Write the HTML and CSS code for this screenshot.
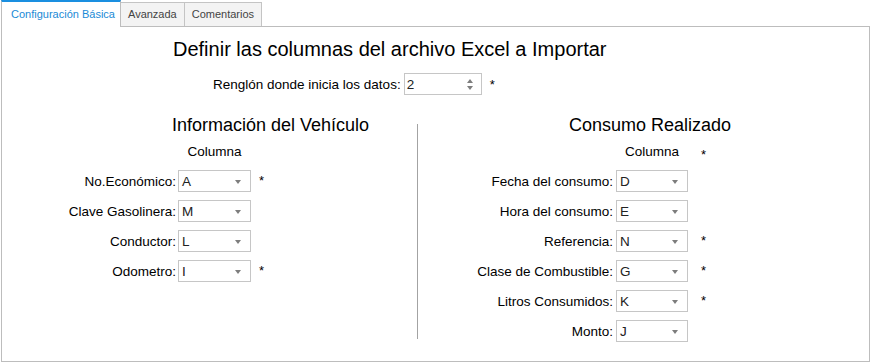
FILE: index.html
```html
<!DOCTYPE html>
<html>
<head>
  <meta charset="UTF-8" />
  <title>Importar Excel</title>
  <link rel="stylesheet" href="styles.css">
</head>
<body>

<div class="tabs">
  <div class="tab active">Configuración Básica</div>
  <div class="tab">Avanzada</div>
  <div class="tab">Comentarios</div>
</div>

<div class="panel">
  <h2 class="title">Definir las columnas del archivo Excel a Importar</h2>

  <div class="start-row">
    <span class="label">Renglón donde inicia los datos:</span>
    <div class="spin">2<span class="spin-arrows"><i class="up"></i><i class="down"></i></span></div>
    <span class="req">*</span>
  </div>

  <div class="columns">
    <div class="section left">
      <h3>Información del Vehículo</h3>
      <div class="fields" id="vehicleFields"></div>
    </div>
    <div class="divider"></div>
    <div class="section right">
      <h3>Consumo Realizado</h3>
      <div class="fields" id="consumoFields"></div>
    </div>
  </div>
</div>

<script>
  const vehicle = [
    { label: "No.Económico:", col: "A", req: true },
    { label: "Clave Gasolinera:", col: "M", req: false },
    { label: "Conductor:", col: "L", req: false },
    { label: "Odometro:", col: "I", req: true }
  ];

  const consumo = [
    { label: "Fecha del consumo:", col: "D", req: false },
    { label: "Hora del consumo:", col: "E", req: false },
    { label: "Referencia:", col: "N", req: true },
    { label: "Clase de Combustible:", col: "G", req: true },
    { label: "Litros Consumidos:", col: "K", req: true },
    { label: "Monto:", col: "J", req: false }
  ];

  function renderFields(id, rows, headReq) {
    const box = document.getElementById(id);
    let html = `<span></span><span class="col-head">Columna</span><span class="req">${headReq ? "*" : ""}</span>`;
    rows.forEach(r => {
      html += `
        <span class="label">${r.label}</span>
        <div class="combo">${r.col}<i class="arrow"></i></div>
        <span class="req">${r.req ? "*" : ""}</span>
      `;
    });
    box.innerHTML = html;
  }

  renderFields("vehicleFields", vehicle, false);
  renderFields("consumoFields", consumo, true);
</script>

</body>
</html>
```

FILE: styles.css
```css
body {
  margin: 0;
  font-family: "Liberation Sans", Arial, sans-serif;
  font-size: 13.5px;
  color: #000;
  background: #fff;
}

.tabs { display: flex; height: 26px; margin-left: 1px; align-items: flex-end; }
.tab {
  height: 24px;
  box-sizing: border-box;
  padding: 5px 7px 0 7px;
  font-size: 11px;
  white-space: nowrap;
  color: #444;
  background: #f3f3f3;
  border: 1px solid #c4c4c4;
  border-bottom: none;
  border-left: none;
}
.tab.active {
  height: 27px;
  margin-bottom: -1px;
  padding: 6px 0 0 9px;
  width: 120px;
  color: #1a8ad6;
  background: #fff;
  border-top: 2px solid #1a8fe0;
  border-left: 1px solid #bdbdbd;
  border-right: 1px solid #bdbdbd;
  position: relative;
}

.panel {
  margin-left: 1px;
  width: 869px;
  height: 336px;
  box-sizing: border-box;
  border: 1px solid #bdbdbd;
}

.title {
  margin: 10px 0 0 171px;
  font-size: 20px;
  font-weight: normal;
  line-height: 24px;
}

.start-row {
  display: flex;
  align-items: center;
  margin: 12px 0 0 211px;
  height: 22px;
}
.start-row .label { margin-right: 3px; }

.spin {
  position: relative;
  width: 78px;
  height: 22px;
  box-sizing: border-box;
  border: 1px solid #c6c6c6;
  padding: 3px 0 0 2px;
  color: #222;
}
.spin-arrows { position: absolute; right: 7px; top: 5px; width: 7px; }
.spin-arrows i { display: block; width: 0; height: 0; border-left: 3px solid transparent; border-right: 3px solid transparent; }
.spin-arrows .up { border-bottom: 4px solid #7d7d7d; }
.spin-arrows .down { border-top: 4px solid #7d7d7d; margin-top: 3px; }

.req { padding-left: 8px; font-size: 13px; }

.columns { display: flex; margin-top: 19px; }

.section h3 {
  margin: 0;
  font-size: 18px;
  font-weight: normal;
  line-height: 22px;
}
.section.left { width: 415px; }
.section.left h3 { padding-left: 170px; }
.section.right h3 { padding-left: 151px; }

.divider {
  width: 1px;
  height: 215px;
  margin-top: 10px;
  background: #a3a3a3;
}

.fields {
  display: grid;
  align-items: center;
  row-gap: 8px;
  margin-top: 8px;
}
.section.left .fields { grid-template-columns: 174px 73px 40px; column-gap: 2px; }
.section.right .fields { grid-template-columns: 195px 72px 40px; column-gap: 3px; }
.fields .label { text-align: right; white-space: nowrap; }
.col-head { text-align: center; line-height: 16px; margin-bottom: 2px; }
.fields .req { align-self: start; padding-top: 3px; padding-left: 6px; }
.section.right .fields .req { padding-left: 10px; }

.combo {
  position: relative;
  height: 22px;
  box-sizing: border-box;
  border: 1px solid #c6c6c6;
  padding: 3px 0 0 3px;
  color: #222;
}
.combo .arrow {
  position: absolute;
  right: 9px;
  top: 9px;
  width: 0;
  height: 0;
  border-left: 3px solid transparent;
  border-right: 3px solid transparent;
  border-top: 4px solid #7d7d7d;
}
```
